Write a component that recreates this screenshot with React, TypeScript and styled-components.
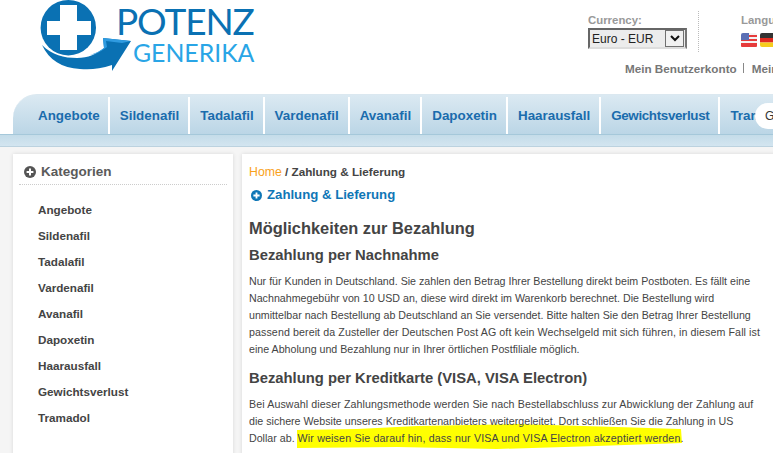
import React from "react";
import styled, { createGlobalStyle } from "styled-components";

const Global = createGlobalStyle`
  html, body { margin: 0; padding: 0; overflow: hidden; background: #f5f5f5; }
  * { box-sizing: border-box; }
`;

const Page = styled.div`
  width: 773px;
  height: 453px;
  overflow: hidden;
  background: #f5f5f5;
  font-family: "Liberation Sans", Arial, sans-serif;
  color: #444;
`;

const Header = styled.header`
  height: 94px;
  background: #fff;
  display: flex;
`;

const Logo = styled.div`
  width: 588px;
  flex: none;
  display: flex;
  align-items: flex-start;
  padding-left: 40px;
`;

const LogoWords = styled.div`
  display: flex;
  flex-direction: column;
  margin-left: -16px;
  font-family: Lato, "Liberation Sans", sans-serif;
  font-weight: 400;
`;

const Potenz = styled.span`
  font-size: 37px;
  line-height: 27px;
  height: 27px;
  margin-top: 7px;
  letter-spacing: -1.1px;
  color: #0a71b3;
`;

const Generika = styled.span`
  font-size: 24.8px;
  line-height: 18px;
  height: 18px;
  margin-top: 10px;
  margin-left: 17px;
  color: #29a5e6;
`;

const TopRight = styled.div`
  width: 185px;
  flex: none;
  overflow: hidden;
`;

const Prefs = styled.div`
  display: flex;
  height: 52px;
  padding-top: 11px;
  white-space: nowrap;
`;

const PrefGroup = styled.div<{ $gap: number }>`
  display: flex;
  flex-direction: column;
  gap: ${(p) => p.$gap}px;
  padding-top: 3px;
`;

const PrefLabel = styled.div`
  font-size: 11.4px;
  line-height: 12px;
  font-weight: bold;
  color: #999;
`;

const SelectBox = styled.div`
  width: 99px;
  height: 21px;
  display: flex;
  align-items: center;
  justify-content: space-between;
  background: #ececec;
  border: 2px solid #666;
  border-right-color: #777;
  border-bottom-color: #ddd;
  padding: 0 1px 0 2px;
  font-size: 12px;
  color: #222;
`;

const SelectArrow = styled.span`
  width: 19px;
  height: 17px;
  display: flex;
  align-items: center;
  justify-content: center;
  background: #f1f1f1;
  border: 1px solid #707070;
`;

const VDivider = styled.div`
  width: 0;
  height: 41px;
  margin: 0 42px 0 11px;
  border-left: 1px dotted #bbb;
`;

const Flags = styled.div`
  display: flex;
  gap: 3px;
`;

const AccountRow = styled.div`
  display: flex;
  align-items: center;
  height: 14px;
  margin-top: 9px;
  padding-left: 37px;
  font-size: 11.7px;
  font-weight: bold;
  color: #777;
  white-space: nowrap;
`;

const Bar = styled.span`
  width: 1px;
  height: 10px;
  background: #888;
  margin: 0 8px 0 6px;
  flex: none;
`;

const NavBand = styled.div`
  position: relative;
  height: 41px;
  padding-left: 13px;
  background: #fff;
  border-bottom: 1px solid #a5c8da;
  overflow: hidden;
`;

const Nav = styled.nav`
  height: 40px;
  width: 800px;
  display: flex;
  padding: 2px 0 0 12px;
  border-top: 1px solid #dbe8f0;
  border-top-left-radius: 24px;
  background: linear-gradient(#dbe9f2, #bbd6e6);
  font-size: 13.4px;
  font-weight: bold;
  color: #1a6cad;
`;

const NavItem = styled.a<{ $first?: boolean; $tight?: boolean }>`
  height: 37px;
  display: flex;
  align-items: center;
  flex: none;
  padding: 0 ${(p) => (p.$first ? 8 : 9)}px 0 ${(p) => (p.$first ? 13 : 10)}px;
  border-right: 2px solid #fff;
  white-space: nowrap;
  letter-spacing: ${(p) => (p.$tight ? "-0.35px" : "0")};
  &:last-child { border-right: 0; }
`;

const SearchPill = styled.div`
  position: absolute;
  top: 9px;
  left: 755px;
  width: 60px;
  height: 26px;
  padding-left: 10px;
  border-radius: 13px;
  background: #fff;
  font-size: 12px;
  line-height: 26px;
  color: #333;
`;

const Strip = styled.div`
  height: 12px;
  background: linear-gradient(#c4dce9, #d3e5f0);
  border-bottom: 1px solid #bcd2df;
`;

const Body = styled.div`
  display: flex;
  align-items: flex-start;
  gap: 9px;
  padding: 7px 0 0 13px;
`;

const Sidebar = styled.aside`
  width: 220px;
  height: 320px;
  flex: none;
  padding: 10px 6px 0;
  background: #fff;
  box-shadow: 0 0 4px rgba(0, 0, 0, 0.12);
`;

const SideHead = styled.div`
  display: flex;
  align-items: center;
  gap: 5px;
  height: 21px;
  padding: 0 0 5px 5px;
  border-bottom: 1px dotted #ccc;
  font-size: 13.5px;
  font-weight: bold;
  color: #5a5a5a;
`;

const SideList = styled.ul`
  list-style: none;
  margin: 12px 0 0;
  padding: 0 0 0 19px;
`;

const SideItem = styled.li`
  height: 26px;
  font-size: 11.7px;
  font-weight: bold;
  line-height: 26px;
  color: #444;
`;

const Main = styled.main`
  width: 560px;
  height: 320px;
  flex: none;
  isolation: isolate;
  padding: 11px 0 0 7px;
  background: #fff;
  box-shadow: 0 0 4px rgba(0, 0, 0, 0.12);
`;

const Crumbs = styled.div`
  font-size: 11.7px;
  line-height: 14px;
  font-weight: bold;
  color: #444;
`;

const Home = styled.a`
  font-size: 12.3px;
  font-weight: normal;
  color: #f9a11b;
`;

const PageTitle = styled.div`
  display: flex;
  align-items: center;
  gap: 5px;
  margin-top: 8px;
  padding-left: 2px;
  font-size: 13.2px;
  line-height: 16px;
  font-weight: bold;
  color: #0f76b6;
`;

const H1 = styled.h1`
  margin: 15px 0 0;
  font-size: 16.4px;
  line-height: 20px;
  font-weight: bold;
  color: #444;
`;

const H2 = styled.h2<{ $top: number }>`
  margin: ${(p) => p.$top}px 0 0;
  font-size: 14.8px;
  line-height: 18px;
  font-weight: bold;
  color: #444;
`;

const Para = styled.p`
  margin: 9px 0 0;
  font-size: 10.67px;
  line-height: 17px;
  color: #444;
`;

const Line = styled.span<{ $track?: number }>`
  display: block;
  white-space: nowrap;
  letter-spacing: ${(p) => p.$track ?? 0}px;
`;

const Marked = styled.span`
  position: relative;
  letter-spacing: 0.16px;
`;

const MarkerStroke = styled.svg`
  position: absolute;
  left: -1px;
  top: -8px;
  width: 386px;
  height: 25px;
  z-index: -1;
`;

const PlusCircle = ({ color, size }: { color: string; size: number }) => (
  <svg width={size} height={size} viewBox="0 0 12 12" style={{ flex: "none" }}>
    <circle cx="6" cy="6" r="6" fill={color} />
    <path d="M5 2.6h2V5h2.4v2H7v2.4H5V7H2.6V5H5z" fill="#fff" />
  </svg>
);

const LogoMark = () => (
  <svg width="92" height="72" viewBox="0 0 92 72" style={{ flex: "none" }}>
    <circle cx="28.3" cy="27.7" r="27.7" fill="#0a71b3" />
    <path d="M20 5h17v16h14v14H37v15H20V35H7V21h13z" fill="#fff" />
    <path d="M2 45 C12 55 24 58 37 58 C48 58 57 54 64 48 L63 38 L91 41 L72 71 L72 65 C60 69 50 70 40 69 C22 68 9 60 2 45z" fill="#fff" stroke="#fff" strokeWidth="2" />
    <path d="M2 45 C12 55 24 58 37 58 C48 58 57 54 64 48 L63 38 L91 41 L72 71 L72 65 C60 69 50 70 40 69 C22 68 9 60 2 45z" fill="#0a71b3" />
    <path d="M50 55 C56 53 60 51 64 48 L63 38 L91 41 L82 43 L66 41 L67 47 C62 51 56 54 50 55z" fill="#2f9be0" />
  </svg>
);

const FlagUS = () => (
  <svg width="16" height="16" viewBox="0 0 16 16">
    <rect y="1" width="16" height="14" rx="2" fill="#f3f3f3" />
    <path d="M0 3h16v2H0zM0 7h16v2H0zM0 11h16v2H0z" fill="#e63b3b" />
    <path d="M0 13h16v1a1 1 0 0 1-1 1H1a1 1 0 0 1-1-1z" fill="#e63b3b" />
    <path d="M2 1h6v7H0V3a2 2 0 0 1 2-2z" fill="#5a6fb5" />
  </svg>
);

const FlagDE = () => (
  <svg width="16" height="16" viewBox="0 0 16 16">
    <path d="M2 1h14v5H0V3a2 2 0 0 1 2-2z" fill="#333" />
    <rect y="6" width="16" height="4.5" fill="#e02a20" />
    <path d="M0 10.5h16V15H2a2 2 0 0 1-2-2z" fill="#f6cc1c" />
  </svg>
);

const categories = ["Angebote", "Sildenafil", "Tadalafil", "Vardenafil", "Avanafil", "Dapoxetin", "Haarausfall", "Gewichtsverlust", "Tramadol"];

export default function App() {
  return (
    <Page>
      <Global />
      <Header>
        <Logo>
          <LogoMark />
          <LogoWords>
            <Potenz>POTENZ</Potenz>
            <Generika>GENERIKA</Generika>
          </LogoWords>
        </Logo>
        <TopRight>
          <Prefs>
            <PrefGroup $gap={2}>
              <PrefLabel>Currency:</PrefLabel>
              <SelectBox>
                Euro - EUR
                <SelectArrow>
                  <svg width="10" height="7" viewBox="0 0 10 7">
                    <path d="M1 1l4 4 4-4" fill="none" stroke="#111" strokeWidth="2" />
                  </svg>
                </SelectArrow>
              </SelectBox>
            </PrefGroup>
            <VDivider />
            <PrefGroup $gap={6}>
              <PrefLabel>Language:</PrefLabel>
              <Flags>
                <FlagUS />
                <FlagDE />
              </Flags>
            </PrefGroup>
          </Prefs>
          <AccountRow>
            Mein Benutzerkonto
            <Bar />
            Mein Warenkorb
          </AccountRow>
        </TopRight>
      </Header>
      <NavBand>
        <Nav>
          {categories.map((label, i) => (
            <NavItem key={label} $first={i === 0} $tight={label === "Gewichtsverlust"}>
              {label}
            </NavItem>
          ))}
        </Nav>
        <SearchPill>Go</SearchPill>
      </NavBand>
      <Strip />
      <Body>
        <Sidebar>
          <SideHead>
            <PlusCircle color="#555" size={12} />
            Kategorien
          </SideHead>
          <SideList>
            {categories.map((c) => (
              <SideItem key={c}>{c}</SideItem>
            ))}
          </SideList>
        </Sidebar>
        <Main>
          <Crumbs>
            <Home>Home</Home> / Zahlung &amp; Lieferung
          </Crumbs>
          <PageTitle>
            <PlusCircle color="#0f76b6" size={11} />
            Zahlung &amp; Lieferung
          </PageTitle>
          <H1>Möglichkeiten zur Bezahlung</H1>
          <H2 $top={8}>Bezahlung per Nachnahme</H2>
          <Para>
            <Line>Nur für Kunden in Deutschland. Sie zahlen den Betrag Ihrer Bestellung direkt beim Postboten. Es fällt eine</Line>
            <Line>Nachnahmegebühr von 10 USD an, diese wird direkt im Warenkorb berechnet. Die Bestellung wird</Line>
            <Line>unmittelbar nach Bestellung ab Deutschland an Sie versendet. Bitte halten Sie den Betrag Ihrer Bestellung</Line>
            <Line $track={0.09}>passend bereit da Zusteller der Deutschen Post AG oft kein Wechselgeld mit sich führen, in diesem Fall ist</Line>
            <Line>eine Abholung und Bezahlung nur in Ihrer örtlichen Postfiliale möglich.</Line>
          </Para>
          <H2 $top={11}>Bezahlung per Kreditkarte (VISA, VISA Electron)</H2>
          <Para>
            <Line $track={0.1}>Bei Auswahl dieser Zahlungsmethode werden Sie nach Bestellabschluss zur Abwicklung der Zahlung auf</Line>
            <Line>die sichere Website unseres Kreditkartenanbieters weitergeleitet. Dort schließen Sie die Zahlung in US</Line>
            <Line>
              Dollar ab.{" "}
              <Marked>
                <MarkerStroke viewBox="0 0 386 25" preserveAspectRatio="none">
                  <path d="M0 6 L60 5 L120 2 L220 0 L320 3 L384 5 L385 19 L300 22 L200 25 L100 23 L0 24z" fill="#ffff00" />
                </MarkerStroke>
                Wir weisen Sie darauf hin, dass nur VISA und VISA Electron akzeptiert werden
              </Marked>
              .
            </Line>
          </Para>
        </Main>
      </Body>
    </Page>
  );
}
